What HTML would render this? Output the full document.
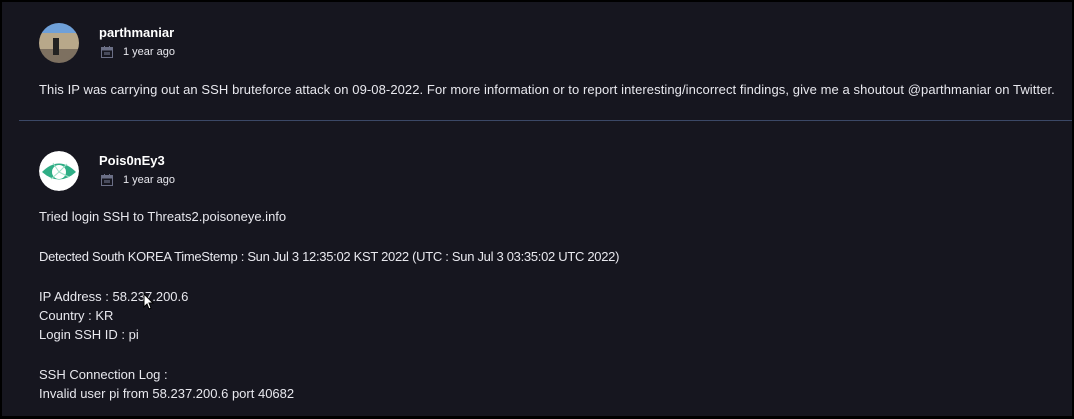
<!DOCTYPE html>
<html><head><meta charset="utf-8"><style>
html,body{margin:0;padding:0;}
body{width:1074px;height:419px;background:#000;position:relative;overflow:hidden;font-family:"Liberation Sans",sans-serif;color:#e8e8ee;}
.panel{position:absolute;left:2px;top:2px;width:1070px;height:414px;background:#16161f;}
.t{position:absolute;white-space:nowrap;font-size:13px;}
.name{font-weight:bold;font-size:13px;color:#fff;}
.date{font-size:11px;color:#e8e8ee;}
.hr{position:absolute;left:19px;top:120px;width:1053px;height:1px;background:#3b4866;}
.av{position:absolute;width:40px;height:40px;border-radius:50%;overflow:hidden;}
</style></head><body>
<div class="panel"></div>
<div class="av" style="left:39px;top:23px;background:linear-gradient(#6fa0d8 0 25%,#b8a88a 25% 65%,#7d7060 65%);"><div style="position:absolute;left:14px;top:15px;width:6px;height:17px;background:#222;"></div></div>
<div class="t name" style="left:99px;top:25px;">parthmaniar</div>
<svg style="position:absolute;left:101px;top:46px" width="12" height="12" viewBox="0 0 12 12"><rect x="0.5" y="1.5" width="11" height="10" fill="none" stroke="#6b6f86"/><rect x="0.5" y="1.5" width="11" height="3" fill="#6b6f86"/><rect x="3" y="0" width="1" height="3" fill="#6b6f86"/><rect x="8" y="0" width="1" height="3" fill="#6b6f86"/><rect x="3" y="6" width="6" height="3" fill="#6b6f86" opacity=".6"/></svg>
<div class="t date" style="left:123px;top:46px;">1 year ago</div>
<div class="t" style="left:39px;top:82px;letter-spacing:0.08px;">This IP was carrying out an SSH bruteforce attack on 09-08-2022. For more information or to report interesting/incorrect findings, give me a shoutout @parthmaniar on Twitter.</div>
<div class="hr"></div>
<svg class="av" style="left:39px;top:151px" viewBox="0 0 40 40"><circle cx="20" cy="20" r="20" fill="#fff"/><path d="M3 21 Q20 4 37 21 Q20 36 3 21Z" fill="#2fae86"/><circle cx="20" cy="21" r="7" fill="#fff"/><path d="M14 12 L20 21 M28 13 L20 21 M30 26 L20 21 M12 28 L20 21" stroke="#9fe0c8" stroke-width="1"/></svg>
<div class="t name" style="left:99px;top:153px;">Pois0nEy3</div>
<svg style="position:absolute;left:101px;top:174px" width="12" height="12" viewBox="0 0 12 12"><rect x="0.5" y="1.5" width="11" height="10" fill="none" stroke="#6b6f86"/><rect x="0.5" y="1.5" width="11" height="3" fill="#6b6f86"/><rect x="3" y="0" width="1" height="3" fill="#6b6f86"/><rect x="8" y="0" width="1" height="3" fill="#6b6f86"/><rect x="3" y="6" width="6" height="3" fill="#6b6f86" opacity=".6"/></svg>
<div class="t date" style="left:123px;top:174px;">1 year ago</div>
<div class="t" style="left:39px;top:209px;">Tried login SSH to Threats2.poisoneye.info</div>
<div class="t" style="left:39px;top:249px;letter-spacing:-0.3px;">Detected South KOREA TimeStemp : Sun Jul 3 12:35:02 KST 2022 (UTC : Sun Jul 3 03:35:02 UTC 2022)</div>
<div class="t" style="left:39px;top:289px;">IP Address : 58.237.200.6</div>
<div class="t" style="left:39px;top:308px;">Country : KR</div>
<div class="t" style="left:39px;top:327px;">Login SSH ID : pi</div>
<div class="t" style="left:39px;top:367px;">SSH Connection Log :</div>
<div class="t" style="left:39px;top:386px;">Invalid user pi from 58.237.200.6 port 40682</div>
<svg style="position:absolute;left:143px;top:293px" width="11" height="17" viewBox="0 0 11 17"><path d="M1 1 L1 14 L4 11 L6 16 L8 15 L6 10 L10 10 Z" fill="#fff" stroke="#000" stroke-width="1"/></svg>
</body></html>
